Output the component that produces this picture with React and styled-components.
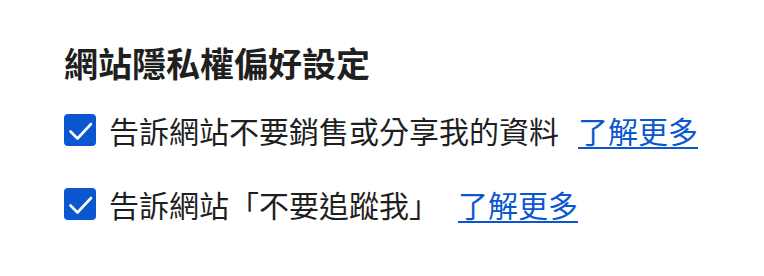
import React from "react"
import styled, { createGlobalStyle } from "styled-components"

const GlobalStyle = createGlobalStyle`
  body {
    margin: 0;
    background: #ffffff;
    font-family: "Noto Sans CJK TC", "Noto Sans", sans-serif;
    color: #1f1f1f;
  }
`

const Panel = styled.section`
  padding: 43px 0 0 64px;
`

const Title = styled.h2`
  margin: 0 0 25px;
  font-size: 34px;
  line-height: 40px;
  font-weight: 700;
  color: #1f1f1f;
`

const List = styled.div`
  display: flex;
  flex-direction: column;
  gap: 30px;
`

const Row = styled.label`
  display: flex;
  align-items: center;
  height: 44px;
  font-size: 30px;
  line-height: 44px;
`

const Box = styled.span`
  flex: none;
  width: 32px;
  height: 32px;
  border-radius: 4px;
  background: #0b57d0;
  display: flex;
  align-items: center;
  justify-content: center;
  margin-right: 13px;
`

const Label = styled.span`
  color: #1f1f1f;
`

const More = styled.a`
  margin-left: 19px;
  color: #0b57d0;
  text-decoration: underline;
  text-decoration-thickness: 2px;
  text-underline-offset: 4px;
  cursor: pointer;
`

function Check() {
  return (
    <Box>
      <svg width="32" height="32" viewBox="0 0 32 32">
        <polyline
          points="6.5,17.5 13.5,24.5 27,10"
          fill="none"
          stroke="#ffffff"
          strokeWidth="2.6"
          strokeLinecap="round"
          strokeLinejoin="round"
        />
      </svg>
    </Box>
  )
}

const options = [
  { id: "sale", text: "告訴網站不要銷售或分享我的資料" },
  { id: "track", text: "告訴網站「不要追蹤我」" },
]

export default function App() {
  return (
    <>
      <GlobalStyle />
      <Panel>
        <Title>網站隱私權偏好設定</Title>
        <List>
          {options.map((o) => (
            <Row key={o.id}>
              <Check />
              <Label>{o.text}</Label>
              <More>了解更多</More>
            </Row>
          ))}
        </List>
      </Panel>
    </>
  )
}
